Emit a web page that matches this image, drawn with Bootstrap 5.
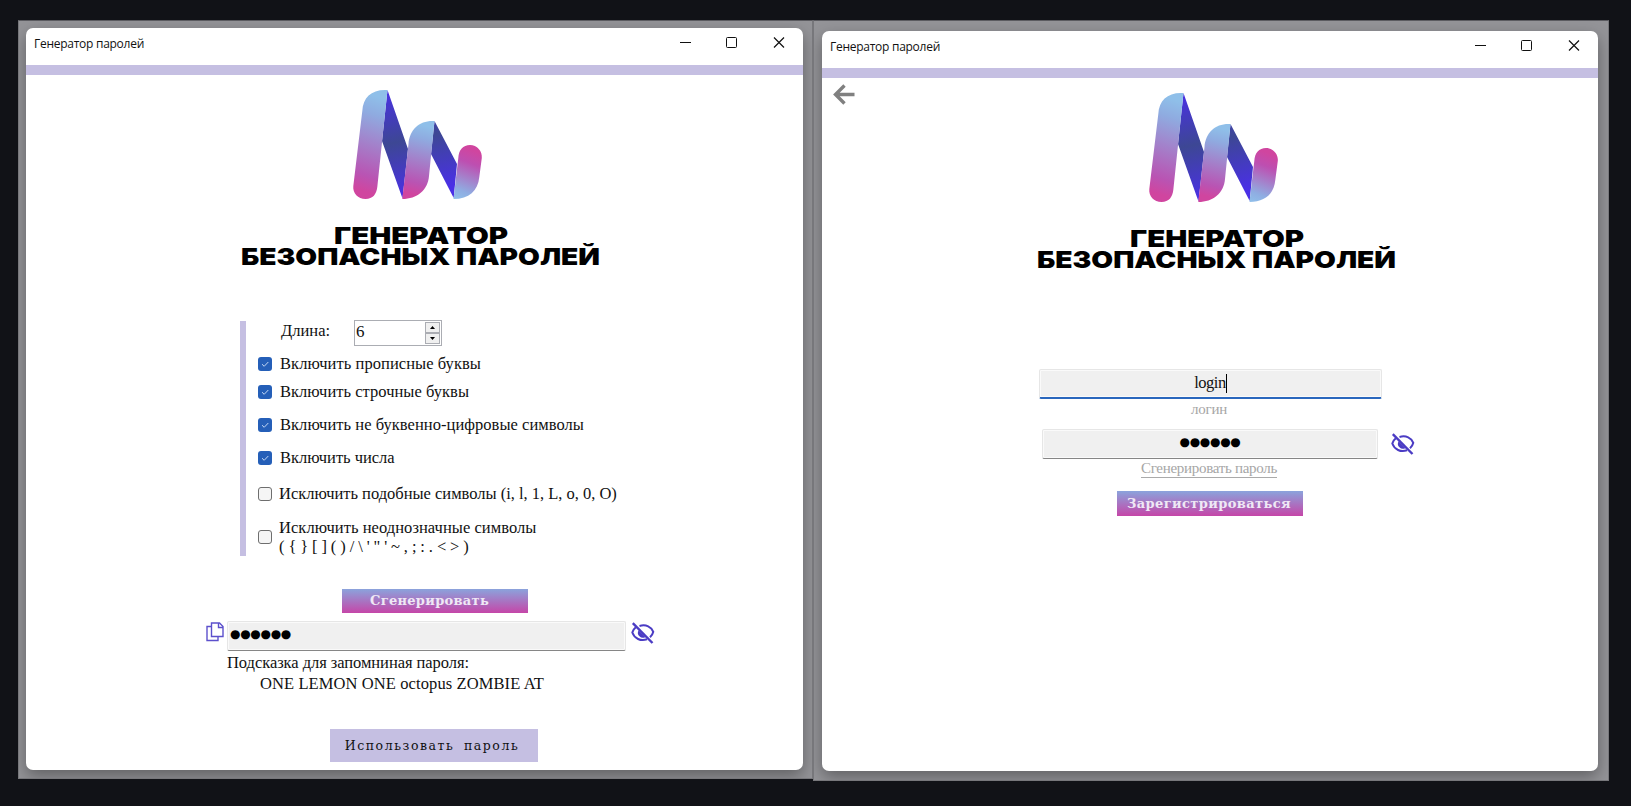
<!DOCTYPE html>
<html lang="ru">
<head>
<meta charset="utf-8">
<title>Генератор паролей</title>
<link href="https://cdn.jsdelivr.net/npm/bootstrap@5.3.0/dist/css/bootstrap.min.css" rel="stylesheet">
<style>
body{background:#111217;font-family:"Liberation Serif",serif;font-size:16.5px;line-height:20px;color:#111;overflow:hidden}
.desk{padding:20px 0 0 18px}
.backdrop{background:#949498;border:1px solid #77777b;border-top-color:#5b5b60;overflow:hidden}
.bd-a{width:795px;height:759px;padding:7px 0 0 7px}
.bd-b{width:796px;height:761px;padding:10px 0 0 8px}
.win{background:#fff;border-radius:7px;box-shadow:0 6px 16px rgba(0,0,0,.35);overflow:hidden}
.win-a{width:777px;height:742px}
.win-b{width:776px;height:740px}
.titlebar{height:37px;padding:0 4px 7px 8px}
.titlebar .t{font:12px/20px "Open Sans","Noto Sans",sans-serif;letter-spacing:-.268px;padding-top:2px}
.titlebar svg{margin-bottom:2px}
.stripe{height:10px;background:#c5bfe2}
.brand-art{display:block;margin-left:194px;width:400px;height:210px}
.brand-art.narrow{margin-left:161px}
.back-arrow{margin:6px 0 0 11px}
.opts{margin:36px 0 0 214px;height:235px}
.rail{width:6px;height:235px;background:#c5bfe2}
.optrow{padding-left:12px}
.optrow .t{margin-left:8px}
.optrow .second,.optrow .first{margin-left:7px}
.len-row{height:29px;padding-left:35px}
.h-1{height:27px}.h-2{height:29px}.h-3{height:37px}.h-4{height:30px}.h-5{height:41px}.h-6{height:46px;line-height:19px}
.chk{width:14px;height:14px;flex:none}
.t{white-space:nowrap;display:inline-block}
.spin{width:88px;height:26px;border:1px solid #abadb3;margin:-1px 0 0 24px;padding:1px;font-size:17px;line-height:19px}
.spinbtn{width:15px;height:11px;background:#f0f0f0;border:1px solid #abadb3}
.grad{width:186px;height:24px;background:linear-gradient(#8ba3dc,#c546a8);color:#efe8f5;font:bold 13px/24px "DejaVu Serif",serif}
.gen{margin:33px 0 0 316px;padding-right:11px;letter-spacing:.292px}
.reg{margin-left:295px;height:25px;padding-right:2px;line-height:25px;letter-spacing:.384px}
.field{background:#f0f0f0;border:1px solid #e6e6e6;border-bottom-color:#868686;border-radius:2px;box-shadow:inset 0 0 0 1px #fafafa;height:30px}
.pw-row{margin:8px 0 0 180px;height:31px}
.pw-a{width:399px;margin-left:3px;padding-left:2px}
.pw-b{width:336px}
.eye-a{margin:1px 0 0 5px}
.eye-b{margin:4px 0 0 13px}
.login{width:343px;margin:81px 0 0 217px;border-bottom:2px solid #2a67bd}
.login .t{font-size:16.5px;line-height:20px;letter-spacing:-.5px;padding-bottom:1px}
.dots{font:12px/20px "DejaVu Sans",sans-serif;color:#000;letter-spacing:-.3px;padding-bottom:4px}
.hint{margin:1px 0 0 201px;height:21px;letter-spacing:-.056px}
.phrase{margin-left:234px;height:20px;letter-spacing:.099px}
.use{width:208px;height:33px;background:#c5bfe2;margin:35px 0 0 304px;padding-right:4px;font:12.5px/33px "DejaVu Serif",serif;letter-spacing:1.55px;word-spacing:4px}
.muted{color:#a6a6a6;font-size:15px}
.login-label{margin-left:369px;height:30px;line-height:21px;letter-spacing:-.241px}
.gen-link{margin-left:319px;height:32px;line-height:18px;letter-spacing:-.298px}
.gen-link .t{border-bottom:1px solid #aaa;line-height:17px}
.caret{width:1px;height:19px;background:#000}
</style>
</head>
<body>
<svg width="0" height="0" class="position-absolute">
<defs>
<linearGradient id="down" x1="0.1" y1="0" x2="0" y2="1"><stop offset="0" stop-color="#8fbfe9"/><stop offset=".17" stop-color="#8fabe0"/><stop offset=".75" stop-color="#b954b3"/><stop offset=".9" stop-color="#d0459f"/></linearGradient>
<linearGradient id="up" x1="0.2" y1="0" x2="0" y2="1"><stop offset="0" stop-color="#d0459f"/><stop offset=".25" stop-color="#bd4fb1"/><stop offset=".8" stop-color="#8fade2"/><stop offset="1" stop-color="#90c0ea"/></linearGradient>
<linearGradient id="fold" x1="0" y1="0" x2="0.15" y2="1"><stop offset="0" stop-color="#4a30e6"/><stop offset=".5" stop-color="#3d4794"/><stop offset="1" stop-color="#4a30e6"/></linearGradient>
<symbol id="logo" viewBox="0 0 400 210">
<path fill="url(#fold)" d="M167.500 15 188 74 182.500 123.500 162 66zM214.500 46 237 89 233.700 123 211 79z"/>
<path fill="url(#down)" d="M167.500 15C152 14 143 22 142.300 36L133.300 111C132.500 118 138 124 145.500 124S156.500 119 157.300 112z"/>
<path fill="url(#down)" d="M214.500 46C200 45 189.500 54 188.500 69L182.300 124C197 124 208 115 209 101z"/>
<path fill="url(#up)" d="M238.300 83C238.700 75 243 70 250 70S262.500 76 261.800 83L259.300 102C258 116 249 124 233.500 124z"/>
<g fill="#000" font-family="Inter,'DejaVu Sans',sans-serif" font-weight="900" font-size="23.500">
<text x="114" y="168.800" textLength="174" lengthAdjust="spacingAndGlyphs">ГЕНЕРАТОР</text>
<text x="21" y="190" textLength="359" lengthAdjust="spacingAndGlyphs">БЕЗОПАСНЫХ ПАРОЛЕЙ</text>
</g>
</symbol>
<symbol id="winbtns" viewBox="0 0 120 12">
<g fill="none" stroke="#111" stroke-width="1"><path d="M1 6.500h11"/><rect x="47.500" y="1.500" width="10" height="10" rx="1"/><path stroke-width="1.200" d="M95 1.500l10 10M105 1.500l-10 10"/></g>
</symbol>
<symbol id="eyeoff" viewBox="0 0 24 23">
<g fill="none" stroke="#4b3cc4" stroke-width="2"><path d="M8.500 4C15 2 20.500 5 22.300 9.800Q21.500 13 19 15.300M4.800 5.200Q2 7.500 1.300 10.500C3.500 16.500 9.500 19.500 16 17.300"/><path stroke-width="2.400" d="M1.800 1.200 21.500 21"/></g><path fill="#4b3cc4" d="M7.600 8.200A5 5 0 0 0 14.500 15z"/>
</symbol>
<symbol id="ticked" viewBox="0 0 14 14"><rect width="14" height="14" rx="3" fill="#255fb8"/><path d="M4 7.200 6.200 9.300 10.300 5" fill="none" stroke="#c4d8f5" stroke-width="1"/></symbol>
<symbol id="unticked" viewBox="0 0 14 14"><rect x=".5" y=".5" width="13" height="13" rx="2.500" fill="#f5f5f5" stroke="#6e6e6e"/></symbol>
</defs>
</svg>

<main class="desk d-flex align-items-start">
<section class="backdrop bd-a">
<div class="win win-a">
<header class="titlebar d-flex align-items-center justify-content-between"><span class="t">Генератор паролей</span><svg width="120" height="12"><use href="#winbtns"/></svg></header>
<div class="stripe"></div>
<svg class="brand-art"><use href="#logo"/></svg>
<div class="opts d-flex align-items-start">
<div class="rail"></div>
<div>
<div class="len-row d-flex"><span class="t">Длина:</span>
<div class="spin d-flex justify-content-between"><span>6</span>
<div><div class="spinbtn d-flex align-items-center justify-content-center"><svg width="5" height="3"><path d="M0 3 2.500 0 5 3z"/></svg></div><div class="spinbtn d-flex align-items-center justify-content-center"><svg width="5" height="3"><path d="M0 0 2.500 3 5 0z"/></svg></div></div></div></div>
<div class="optrow h-1 d-flex align-items-center"><svg class="chk"><use href="#ticked"/></svg><span class="t" style="letter-spacing:.061px">Включить прописные буквы</span></div>
<div class="optrow h-2 d-flex align-items-center"><svg class="chk"><use href="#ticked"/></svg><span class="t" style="letter-spacing:.029px">Включить строчные буквы</span></div>
<div class="optrow h-3 d-flex align-items-center"><svg class="chk"><use href="#ticked"/></svg><span class="t" style="letter-spacing:.041px">Включить не буквенно-цифровые символы</span></div>
<div class="optrow h-4 d-flex align-items-center"><svg class="chk"><use href="#ticked"/></svg><span class="t" style="letter-spacing:-.03px">Включить числа</span></div>
<div class="optrow h-5 d-flex align-items-center"><svg class="chk"><use href="#unticked"/></svg><span class="t first" style="letter-spacing:-.01px">Исключить подобные символы (i, l, 1, L, o, 0, O)</span></div>
<div class="optrow h-6 d-flex align-items-center"><svg class="chk"><use href="#unticked"/></svg><div><span class="t first" style="letter-spacing:.05px">Исключить неоднозначные символы</span><br><span class="t second" style="letter-spacing:-.11px">( { } [ ] ( ) / \ ' " ' ~ , ; : . &lt; &gt; )</span></div></div>
</div>
</div>
<div class="grad gen text-center">Сгенерировать</div>
<div class="pw-row d-flex">
<svg width="18" height="21" fill="#fff" stroke="#5c50cc" stroke-width="1.400"><path d="M1 5.500h11v14H1z"/><path d="M5.500 2h8l3.500 3.500V15.500H5.500zM12.500 2v4.500H17"/></svg>
<div class="field pw-a d-flex align-items-center"><span class="dots t">●●●●●●</span></div>
<svg width="24" height="23" class="eye-a"><use href="#eyeoff"/></svg></div>
<div class="hint"><span class="t">Подсказка для запомниная пароля:</span></div>
<div class="phrase"><span class="t">ONE LEMON ONE octopus ZOMBIE AT</span></div>
<div class="use text-center"><span class="t">Использовать пароль</span></div>
</div>
</section>
<section class="backdrop bd-b">
<div class="win win-b">
<header class="titlebar d-flex align-items-center justify-content-between"><span class="t">Генератор паролей</span><svg width="120" height="12"><use href="#winbtns"/></svg></header>
<div class="stripe"></div>
<div class="d-flex">
<svg class="back-arrow" width="22" height="22" fill="none" stroke="#808080" stroke-width="3.400"><path d="M21.500 10.500H3M11.500 1.500l-9 9 9 9"/></svg>
<svg class="brand-art narrow"><use href="#logo"/></svg></div>
<div class="field login d-flex justify-content-center align-items-center"><span class="t">login</span><span class="caret"></span></div>
<div class="muted login-label"><span class="t">логин</span></div>
<div class="d-flex" style="margin-left:220px"><div class="field pw-b d-flex justify-content-center align-items-center"><span class="dots t">●●●●●●</span></div><svg width="24" height="23" class="eye-b"><use href="#eyeoff"/></svg></div>
<div class="muted gen-link"><span class="t">Сгенерировать пароль</span></div>
<div class="grad reg text-center">Зарегистрироваться</div>
</div>
</section>
</main>
<script src="https://cdn.jsdelivr.net/npm/bootstrap@5.3.0/dist/js/bootstrap.bundle.min.js"></script>
</body>
</html>
